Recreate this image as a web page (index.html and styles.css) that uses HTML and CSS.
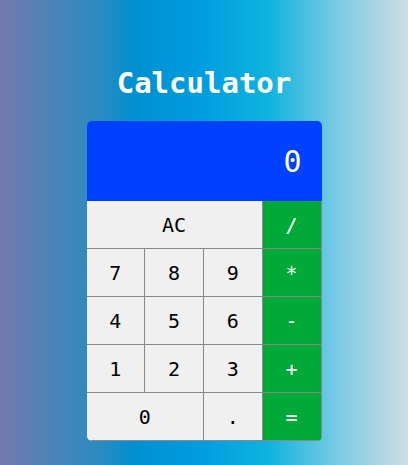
FILE: index.html
```html
<!DOCTYPE html>
<html lang="en">
<head>
<meta charset="utf-8">
<title>Calculator</title>
<link rel="stylesheet" href="styles.css">
</head>
<body>
<main class="page">
  <h1 class="title">Calculator</h1>
  <div class="calc">
    <div class="display">0</div>
    <div class="keys">
      <button class="key span3">AC</button>
      <button class="key op">/</button>
      <button class="key">7</button>
      <button class="key">8</button>
      <button class="key">9</button>
      <button class="key op">*</button>
      <button class="key">4</button>
      <button class="key">5</button>
      <button class="key">6</button>
      <button class="key op">-</button>
      <button class="key">1</button>
      <button class="key">2</button>
      <button class="key">3</button>
      <button class="key op">+</button>
      <button class="key span2">0</button>
      <button class="key">.</button>
      <button class="key op">=</button>
    </div>
  </div>
</main>
</body>
</html>
```
FILE: styles.css
```css
html, body {
  margin: 0;
  height: 100%;
}
body {
  font-family: "DejaVu Sans Mono", monospace;
  background: linear-gradient(90deg, #7479ae 0%, #2b8bc1 24%, #0090d0 33%, #009ddf 49%, #10b3de 66%, #7ccbe4 83%, #cfdde3 100%);
}
.page {
  display: flex;
  flex-direction: column;
  align-items: center;
  padding-top: 66px;
}
.title {
  margin: 0 0 21px;
  font-size: 29px;
  font-weight: bold;
  color: #fff;
  line-height: normal;
}
.calc {
  width: 235px;
  border-radius: 5px;
  overflow: hidden;
}
.display {
  height: 80px;
  background: #0040ff;
  color: #fff;
  font-size: 30px;
  display: flex;
  align-items: center;
  justify-content: flex-end;
  padding: 0 20px;
  box-sizing: border-box;
}
.keys {
  display: grid;
  grid-template-columns: repeat(4, 1fr);
}
.key {
  height: 48px;
  margin: 0;
  padding: 0;
  border: 0;
  border-right: 1px solid #888;
  border-bottom: 1px solid #888;
  background: #f0f0f0;
  color: #000;
  font-family: "DejaVu Sans Mono", monospace;
  font-size: 20px;
}
.span2 {
  grid-column: span 2;
}
.span3 {
  grid-column: span 3;
}
.op {
  background: #00aa38;
  color: #fff;
}
```
